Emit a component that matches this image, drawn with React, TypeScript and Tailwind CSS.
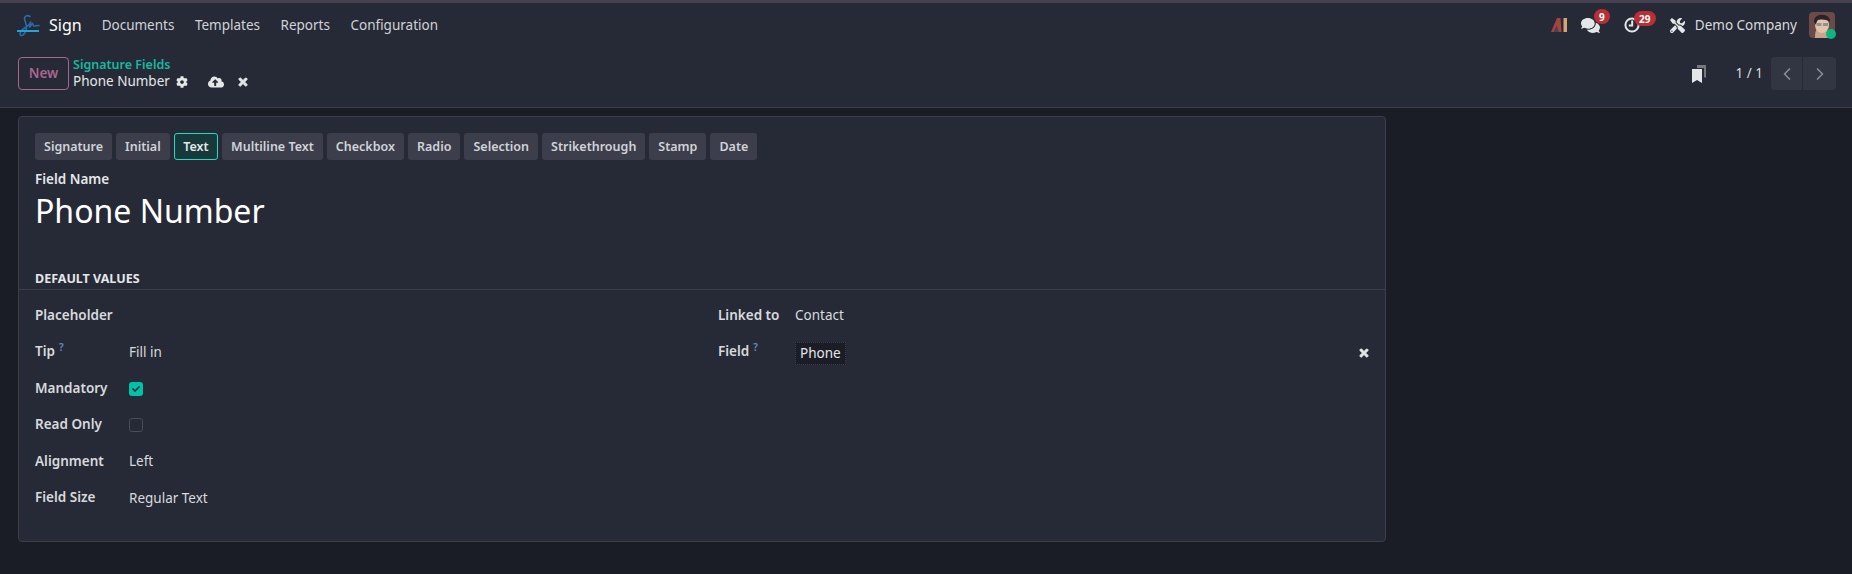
import { FaCog, FaCloudUploadAlt, FaTimes, FaComments, FaTools, FaCheck } from "react-icons/fa";
import { LuChevronLeft, LuChevronRight } from "react-icons/lu";

const tabs = ["Signature", "Initial", "Text", "Multiline Text", "Checkbox", "Radio", "Selection", "Strikethrough", "Stamp", "Date"];

function Badge({ children, className }: { children: string; className: string }) {
  return (
    <span className={`absolute flex h-[15px] items-center justify-center rounded-full bg-[#b92f34] text-[10px] font-bold leading-none text-white ${className}`}>
      {children}
    </span>
  );
}

function Label({ children, help }: { children: string; help?: boolean }) {
  return (
    <div className="font-semibold text-[#d8dadd]">
      {children}
      {help && <sup className="ml-1 text-[10px] font-semibold text-[#5b8fc4]">?</sup>}
    </div>
  );
}

function Row({ label, help, children }: { label: string; help?: boolean; children?: React.ReactNode }) {
  return (
    <div className="flex h-[36.5px] items-center">
      <div className="w-[94px]">
        <Label help={help}>{label}</Label>
      </div>
      <div className="flex items-center pt-[1px]">{children}</div>
    </div>
  );
}

function Logo() {
  return (
    <svg width="24" height="26" viewBox="0 0 24 26" fill="none">
      <path d="M13 4.500C11 3 8 3.500 7.500 6c-.4 2.500 2.500 6 2 10-.4 4-3 7.500-5 7.500-2.500 0-1.500-4 1-6 2.500-2 7-4 8.500-8-1 2.500-2 5-1.500 5.500s2-3 3-3.500c.5 1 .5 2.500 1.500 2.500 1.500 0 3-.5 5-.5" stroke="#2a6ca8" strokeWidth="1.600" strokeLinecap="round" />
      <rect x="0" y="18" width="22" height="2" fill="#1ea7d6" />
    </svg>
  );
}

function AiLogo() {
  return (
    <svg width="17" height="14" viewBox="0 0 17 14">
      <polygon points="0,14 6,0 9.500,0 10.500,14 7.500,14 5.500,8 3,14" fill="#a0453f" />
      <polygon points="3,14 5.500,8 7.500,14" fill="#5b3b4a" />
      <rect x="12.500" y="0" width="3.500" height="14" fill="#d9a272" />
    </svg>
  );
}

function ActivityIcon() {
  return (
    <svg width="16" height="16" viewBox="0 0 16 16" fill="none">
      <circle cx="8" cy="8" r="6.600" stroke="#e4e7e8" strokeWidth="2" />
      <path d="M8.200 3.500V8.500H4.800" stroke="#e4e7e8" strokeWidth="2" />
    </svg>
  );
}

function Avatar() {
  return (
    <div className="relative h-[26px] w-[26px]">
      <svg width="26" height="26" viewBox="0 0 26 26" className="rounded">
        <rect width="26" height="26" fill="#6b4a48" />
        <path d="M6 26c0-6 1-8 2-9h9l3 3v6z" fill="#c9a48e" />
        <ellipse cx="13" cy="13" rx="7" ry="8" fill="#e4c3a8" />
        <path d="M5 10c0-6 5-8 10-7 4 .5 6 3 6 7-3-3-10-3-12-2-1 1-2 3-2 5z" fill="#2a2428" />
        <rect x="7.500" y="11" width="5" height="3" fill="#8b9396" />
        <rect x="14" y="11" width="5" height="3" fill="#8b9396" />
      </svg>
      <span className="absolute -bottom-[1px] -right-[1px] h-[10px] w-[10px] rounded-full bg-[#0fb57e]" />
    </div>
  );
}

function PagerIcon() {
  return (
    <svg width="14" height="18" viewBox="0 0 14 18">
      <path d="M5 0h9v13l-2-1V3H5z" fill="#77797f" />
      <path d="M0 4h10v14l-5-3-5 3z" fill="#e4e7e8" />
    </svg>
  );
}

export default function App() {
  return (
    <div className="h-[574px] w-[1852px] overflow-hidden bg-[#1b1d26] text-[13.5px] leading-[21px] text-[#d8dadd] [font-family:'Noto_Sans',sans-serif]">
      {/* navbar */}
      <div className="flex h-[46px] items-center border-t-[3px] border-[#46404f] bg-[#262a36] pl-[17px] pr-[17px] pt-[1px]">
        <Logo />
        <span className="ml-[8px] text-[16px] text-white">Sign</span>
        <nav className="ml-[20px] flex gap-[20.5px] text-[#d0d3d8]">
          <span>Documents</span>
          <span>Templates</span>
          <span>Reports</span>
          <span>Configuration</span>
        </nav>
        <div className="ml-auto flex items-center">
          <AiLogo />
          <div className="relative ml-[13px] flex h-[20px] w-[20px] items-center text-[#e4e7e8]">
            <FaComments size={19} />
            <Badge className="left-[13px] -top-[6px] w-[16px]">9</Badge>
          </div>
          <div className="relative ml-[23px] flex h-[20px] w-[20px] items-center">
            <ActivityIcon />
            <Badge className="left-[10px] -top-[4px] w-[22px]">29</Badge>
          </div>
          <div className="ml-[26px] text-[#e4e7e8]">
            <FaTools size={15} />
          </div>
          <span className="ml-[10px] text-[#d8dadd]">Demo Company</span>
          <div className="ml-[12px]">
            <Avatar />
          </div>
        </div>
      </div>

      {/* control panel */}
      <div className="flex h-[62px] items-start border-b border-[#3c3e4b] bg-[#262a36] pl-[18px] pr-[16px] pt-[11px]">
        <button className="flex h-[33px] w-[51px] items-center justify-center rounded-[4px] border border-[#a8668f] font-semibold text-[#a8668f]">
          New
        </button>
        <div className="ml-[4px] flex flex-col">
          <span className="text-[12.5px] font-semibold leading-[16px] text-[#17b8a0]">Signature Fields</span>
          <div className="flex items-center leading-[17px] text-[#e4e7e8]">
            <span>Phone Number</span>
            <FaCog size={12} className="ml-[6px]" />
            <FaCloudUploadAlt size={16} className="ml-[20px]" />
            <FaTimes size={12} className="ml-[13px] stroke-current stroke-[40]" />
          </div>
        </div>
        <div className="ml-auto flex items-center">
          <PagerIcon />
          <span className="ml-[30px] text-[#d8dadd]">1 / 1</span>
          <div className="ml-[8px] flex h-[33px] overflow-hidden rounded-[4px] bg-[#323542]">
            <div className="flex w-[32px] items-center justify-center border-r border-[#262a36] text-[#8a8c94]">
              <LuChevronLeft size={20} />
            </div>
            <div className="flex w-[33px] items-center justify-center text-[#8a8c94]">
              <LuChevronRight size={20} />
            </div>
          </div>
        </div>
      </div>

      {/* form sheet */}
      <div className="ml-[18px] mt-[8px] h-[426px] w-[1368px] rounded-[4px] border border-[#3c3e4b] bg-[#262a36]">
        <div className="flex gap-[4px] pl-[16px] pt-[16px]">
          {tabs.map((t) =>
            t === "Text" ? (
              <span key={t} className="flex h-[27px] items-center rounded-[3px] border border-[#1fdcc0] bg-[#17393c] px-[8.5px] text-[12.5px] font-semibold text-[#e4e7e8]">
                {t}
              </span>
            ) : (
              <span key={t} className="flex h-[27px] items-center rounded-[3px] bg-[#3c3e4b] px-[9px] text-[12.5px] font-semibold text-[#d0d3d8]">
                {t}
              </span>
            ),
          )}
        </div>
        <div className="pl-[16px] pt-[9px]">
          <div className="font-semibold leading-[20px] text-[#e4e7e8]">Field Name</div>
          <div className="text-[32px] leading-[44px] text-white">Phone Number</div>
        </div>
        <div className="mt-[37px] border-b border-[#3c3e4b] pb-[1px] pl-[16px] text-[12.5px] font-bold leading-[18px] text-[#e4e7e8]">
          DEFAULT VALUES
        </div>
        <div className="flex pt-[7px]">
          <div className="w-[699px] pl-[16px]">
            <Row label="Placeholder" />
            <Row label="Tip" help>
              <span>Fill in</span>
            </Row>
            <Row label="Mandatory">
              <span className="flex h-[14px] w-[14px] items-center justify-center rounded-[3px] bg-[#00c2a8] text-[#1b1d26]">
                <FaCheck size={8} />
              </span>
            </Row>
            <Row label="Read Only">
              <span className="h-[14px] w-[14px] rounded-[3px] border border-[#4a4c58]" />
            </Row>
            <Row label="Alignment">
              <span>Left</span>
            </Row>
            <Row label="Field Size">
              <span>Regular Text</span>
            </Row>
          </div>
          <div className="flex-1 pr-[16px]">
            <div className="flex h-[36.500px] items-center">
              <div className="w-[77px]">
                <Label>Linked to</Label>
              </div>
              <span>Contact</span>
            </div>
            <div className="flex h-[36.500px] items-center">
              <div className="w-[77px]">
                <Label help>Field</Label>
              </div>
              <span className="mt-[3px] flex h-[23px] items-center border border-dotted border-[#3c3e4b] bg-[#1b1d26] px-[4px] text-[#e4e7e8]">
                Phone
              </span>
              <FaTimes size={12} className="ml-auto mr-[-1px] mt-[2px] stroke-current stroke-[40] text-[#e4e7e8]" />
            </div>
          </div>
        </div>
      </div>
    </div>
  );
}
